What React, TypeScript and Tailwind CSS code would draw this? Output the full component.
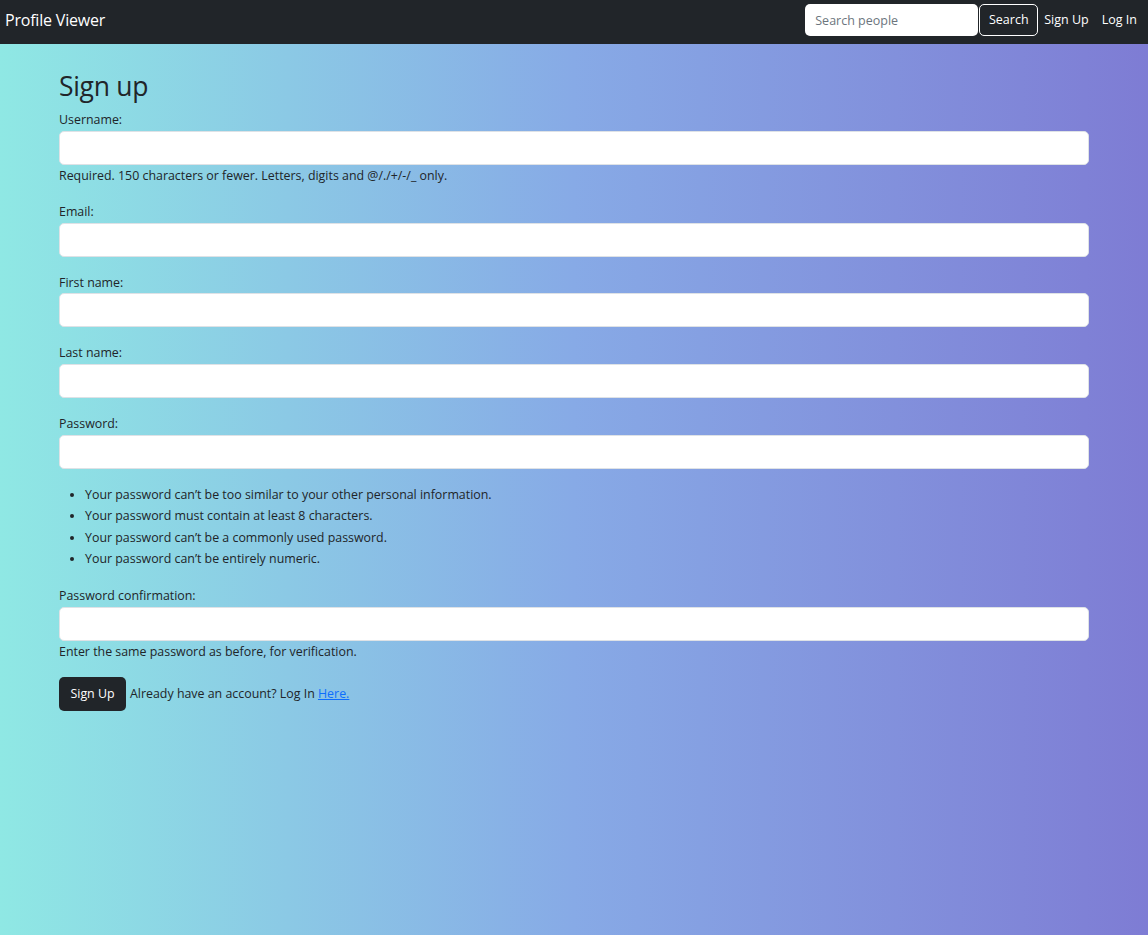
export default function App() {
  const fields = [
    { label: 'Username:', help: 'Required. 150 characters or fewer. Letters, digits and @/./+/-/_ only.' },
    { label: 'Email:' },
    { label: 'First name:' },
    { label: 'Last name:' },
  ]

  return (
    <div
      className="min-h-[935px] text-[#212529] bg-[linear-gradient(to_right,#8fe8e4,#87aae6,#7e7cd4)]"
      style={{ fontFamily: '"Open Sans", "Noto Sans", Arial, sans-serif' }}
    >
      {/* Navbar */}
      <nav className="h-[44px] bg-[#212529] flex items-center justify-between pl-[5px] pr-[11px] pb-[4px]">
        <span className="text-white text-[16px] tracking-[-0.2px]">Profile Viewer</span>
        <div className="flex items-center">
          <input
            type="text"
            placeholder="Search people"
            className="w-[173px] h-[32px] bg-white rounded-[5px] px-[10px] text-[12.5px] text-[#212529] placeholder:text-[#6c757d] outline-none"
          />
          <button className="ml-[1px] h-[32px] w-[59px] rounded-[5px] border border-white text-white text-[12.5px] bg-[#212529]">
            Search
          </button>
          <a href="#" className="ml-[6px] text-white text-[12.5px]">Sign Up</a>
          <a href="#" className="ml-[13px] text-white text-[12.5px]">Log In</a>
        </div>
      </nav>

      {/* Form */}
      <div className="max-w-[1030px] mx-auto pt-[25px] text-[12.4px] leading-[21.6px]">
        <h2 className="text-[26.5px] leading-[34px] font-normal mb-[6px] tracking-[-0.3px]">Sign up</h2>
        <form>
          {fields.map((f) => (
            <div key={f.label} className="mb-[15px]">
              <label className="block">{f.label}</label>
              <input className="block w-full h-[34px] bg-white border border-[#dee2e6] rounded-[5px] outline-none px-3" />
              {f.help && <span className="block">{f.help}</span>}
            </div>
          ))}
          <div className="mb-[15px]">
            <label className="block">Password:</label>
            <input type="password" className="block w-full h-[34px] bg-white border border-[#dee2e6] rounded-[5px] outline-none px-3" />
          </div>
          <ul className="list-disc pl-[26px] mb-[15px]">
            <li>Your password can’t be too similar to your other personal information.</li>
            <li>Your password must contain at least 8 characters.</li>
            <li>Your password can’t be a commonly used password.</li>
            <li>Your password can’t be entirely numeric.</li>
          </ul>
          <div className="mb-[15px]">
            <label className="block">Password confirmation:</label>
            <input type="password" className="block w-full h-[34px] bg-white border border-[#dee2e6] rounded-[5px] outline-none px-3" />
            <span className="block">Enter the same password as before, for verification.</span>
          </div>
          <div className="flex items-center">
            <button className="h-[34px] w-[67px] rounded-[5px] bg-[#212529] text-white text-[12.4px]">Sign Up</button>
            <span className="ml-[4px]">
              Already have an account? Log In <a href="#" className="text-[#0d6efd] underline">Here.</a>
            </span>
          </div>
        </form>
      </div>
    </div>
  )
}
